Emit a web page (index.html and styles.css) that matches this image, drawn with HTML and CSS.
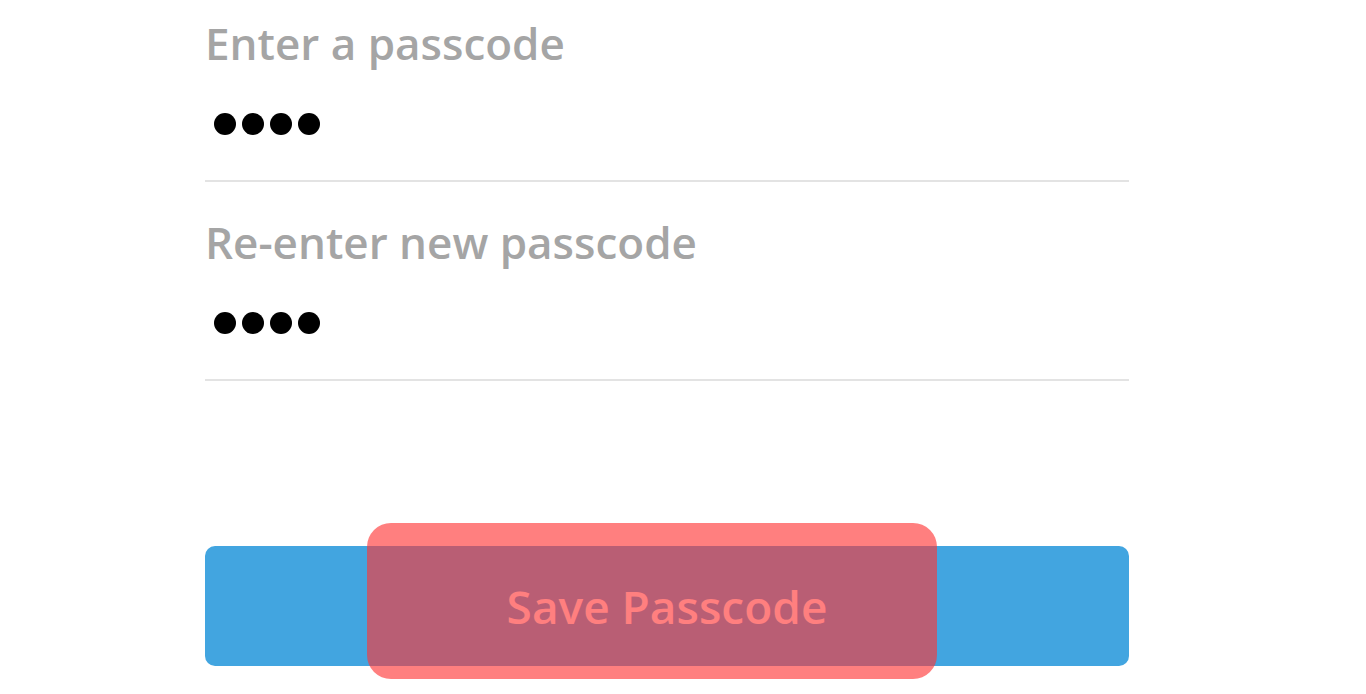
FILE: index.html
```html
<!DOCTYPE html>
<html lang="en">
  <head>
    <meta charset="UTF-8" />
    <meta name="viewport" content="width=device-width, initial-scale=1.0" />
    <title>Set Passcode</title>
    <link rel="stylesheet" href="styles.css">
  </head>
  <body>
    <div class="passcode-form">
      <div class="field">
        <div class="label">Enter a passcode</div>
        <div class="dots">
          <span class="dot"></span>
          <span class="dot"></span>
          <span class="dot"></span>
          <span class="dot"></span>
        </div>
      </div>
      <div class="field">
        <div class="label">Re-enter new passcode</div>
        <div class="dots">
          <span class="dot"></span>
          <span class="dot"></span>
          <span class="dot"></span>
          <span class="dot"></span>
        </div>
      </div>

      <div class="save-wrap">
        <button class="btn-save">Save Passcode</button>
        <div class="highlight"></div>
      </div>
    </div>
  </body>
</html>
```

FILE: styles.css
```css
body {
  margin: 0;
  background: #fff;
  font-family: "Open Sans", Arial, sans-serif;
}

.passcode-form {
  width: 924px;
  margin-left: 205px;
  padding-top: 15px;
  padding-bottom: 28px;
}

.field {
  padding-bottom: 45px;
  border-bottom: 2px solid #e3e3e3;
}

.field + .field {
  padding-top: 32px;
}

.label {
  font-size: 44px;
  font-weight: 600;
  color: #a5a5a5;
  line-height: 57px;
}

.dots {
  display: flex;
  gap: 6px;
  margin-top: 41px;
  padding-left: 9px;
}

.dot {
  width: 22px;
  height: 22px;
  border-radius: 50%;
  background: #000;
}

.save-wrap {
  position: relative;
  margin-top: 165px;
}

.btn-save {
  display: block;
  width: 100%;
  height: 120px;
  border: none;
  border-radius: 10px;
  background: #42a5e0;
  color: #fff;
  font-family: "Open Sans", Arial, sans-serif;
  font-size: 46px;
  font-weight: 600;
  cursor: pointer;
}

.highlight {
  position: absolute;
  left: 162px;
  top: -23px;
  width: 570px;
  height: 156px;
  border-radius: 24px;
  background: rgba(255, 53, 53, 0.63);
}
```
